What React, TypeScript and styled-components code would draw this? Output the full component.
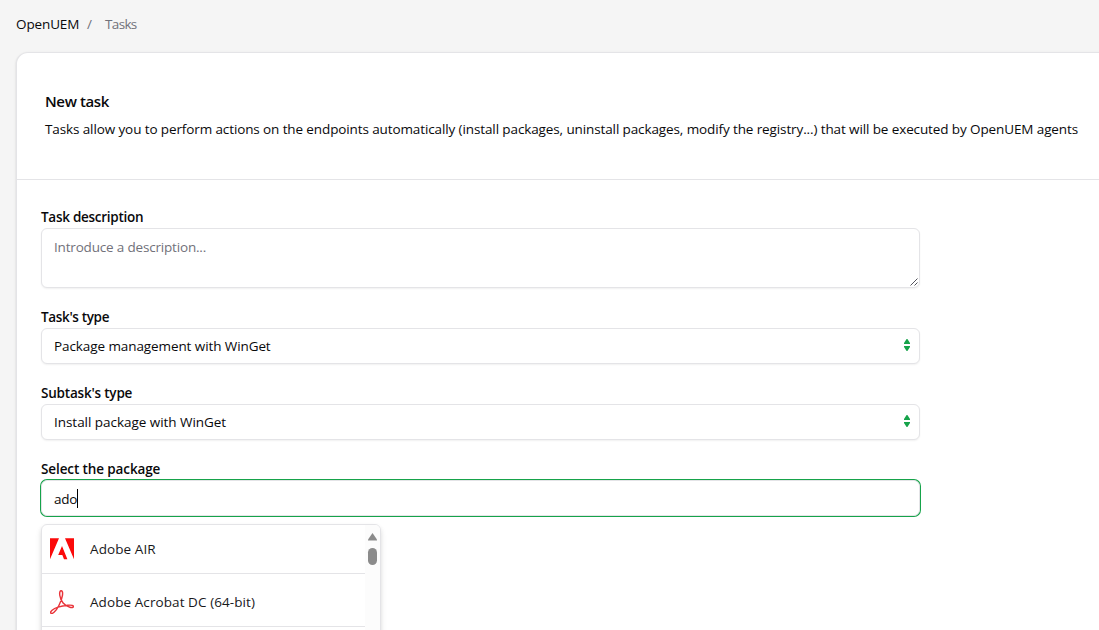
import React from 'react';
import styled, { createGlobalStyle } from 'styled-components';

const GlobalStyle = createGlobalStyle`
  *, *::before, *::after { box-sizing: border-box; }
  body {
    margin: 0;
    background: #f5f5f5;
    color: #09090b;
    font: 400 14px/20px 'Segoe UI', 'Open Sans', 'Noto Sans', sans-serif;
    overflow: hidden;
  }
`;

const Page = styled.div`
  height: 630px;
  display: flex;
  flex-direction: column;
  padding-left: 16px;
  overflow: hidden;
`;

const Fit = styled.span<{ $spacing?: number; $size?: number }>`
  font-size: ${(p) => p.$size ?? 13.5}px;
  letter-spacing: ${(p) => p.$spacing ?? 0}px;
  white-space: nowrap;
`;

const Breadcrumb = styled.nav`
  display: flex;
  height: 52px;
  padding: 14px 0 18px;
  color: #71717a;
`;

const Crumb = styled.span<{ $active?: boolean; $width: number }>`
  width: ${(p) => p.$width}px;
  color: ${(p) => (p.$active ? '#09090b' : '#71717a')};
`;

const Card = styled.main`
  flex: 1;
  display: flex;
  flex-direction: column;
  margin-right: -16px;
  background: #fff;
  border: 1px solid #e4e4e7;
  border-bottom: 0;
  border-radius: 12px 12px 0 0;
  box-shadow: 0 1px 3px rgba(0, 0, 0, 0.1), 0 1px 2px rgba(0, 0, 0, 0.06);
`;

const CardHeader = styled.header`
  height: 127px;
  padding: 37px 28px 0;
  border-bottom: 1px solid #e4e4e7;
`;

const Title = styled.h1`
  margin: 0 0 6px;
  font-size: 16px;
  line-height: 22px;
  font-weight: 600;
`;

const Description = styled.p`
  margin: 0;
  padding-top: 1px;
`;

const Form = styled.form`
  display: flex;
  flex-direction: column;
  gap: 20px;
  width: 903px;
  padding: 28px 0 0 24px;
`;

const Field = styled.div`
  display: flex;
  flex-direction: column;
`;

const Label = styled.label`
  height: 20px;
  line-height: 18px;
  font-weight: 600;
`;

const Control = styled.div<{ $height: number; $focused?: boolean }>`
  display: flex;
  justify-content: space-between;
  height: ${(p) => p.$height}px;
  padding: 8px 9px 0 12px;
  line-height: ${(p) => (p.$focused ? 21 : 19)}px;
  background: #fff;
  border: 1px solid #e4e4e7;
  border-radius: 6px;
  box-shadow: ${(p) => (p.$focused ? '0 0 0 1px #16a34a' : '0 1px 2px rgba(0, 0, 0, 0.06)')};
`;

const Placeholder = styled.span`
  color: #71717a;
`;

const Grip = styled.svg`
  align-self: flex-end;
  margin: 0 -8px 1px 0;
`;

const Caret = styled.span`
  width: 1px;
  height: 19px;
  margin-right: auto;
  background: #000;
`;

const Dropdown = styled.div`
  display: flex;
  width: 340px;
  height: 160px;
  margin-top: 8px;
  border: 1px solid #e4e4e7;
  border-radius: 6px;
  box-shadow: 0 4px 6px rgba(0, 0, 0, 0.1), 0 2px 4px rgba(0, 0, 0, 0.06);
  overflow: hidden;
`;

const Options = styled.ul`
  flex: 1;
  margin: 0;
  padding: 0;
  list-style: none;
`;

const Option = styled.li<{ $height: number }>`
  display: flex;
  align-items: flex-end;
  gap: 16px;
  height: ${(p) => p.$height}px;
  padding: 0 8px 12px;
  border-bottom: 1px solid #e4e4e7;
  color: #18181b;
`;

const OptionText = styled.span`
  height: 22px;
`;

const Scrollbar = styled.div`
  display: flex;
  flex-direction: column;
  align-items: center;
  gap: 7px;
  width: 15px;
  padding-top: 8px;
  background: #fcfcfc;
`;

const Thumb = styled.div`
  width: 9px;
  height: 17px;
  border-radius: 5px;
  background: #8b8b8b;
`;

const SorterIcon = styled.svg`
  margin-top: 2px;
`;

const Sorter = () => (
  <SorterIcon width="6" height="12" viewBox="0 0 6 12" fill="#16a34a">
    <path d="M2.6 0H3.4L6 4V5H0V4ZM0 7H6V8L3.4 12H2.6L0 8Z" />
  </SorterIcon>
);

const AdobeLogo = () => (
  <svg width="24" height="24" viewBox="0 0 24 24" fill="#fb0a0a">
    <path d="M0 1.3H9L0 22.3ZM15 1.3H24V22.3ZM12 9.1L17.4 22.3H14L12.3 18.1H8.2Z" />
  </svg>
);

const AcrobatLogo = () => (
  <svg width="24" height="24" viewBox="0 0 24 24" fill="none" stroke="#e9343a" strokeWidth="1.45">
    <path d="M0.9 23.2C-0.4 21.8 3 18.8 8 17.1C13.7 15.2 23.2 14.2 23.4 16.4C23.6 18.7 17.3 17.7 13.1 13C9.3 8.7 8.7 0.7 11.1 0.7C13.8 0.7 12.7 8.2 8.9 15.5C5.8 21.5 2.4 24.5 0.9 23.2Z" />
  </svg>
);

export default function App() {
  return (
    <>
      <GlobalStyle />
      <Page>
        <Breadcrumb>
          <Crumb $active $width={71}><Fit $spacing={-0.12}>OpenUEM</Fit></Crumb>
          <Crumb $width={18}><Fit>/</Fit></Crumb>
          <Crumb $width={60}><Fit $spacing={-0.65}>Tasks</Fit></Crumb>
        </Breadcrumb>
        <Card>
          <CardHeader>
            <Title><Fit $size={15} $spacing={-0.38}>New task</Fit></Title>
            <Description>
              <Fit $spacing={-0.112}>Tasks allow you to perform actions on the endpoints automatically (install packages, uninstall packages, modify the registry...) that will be executed by OpenUEM agents</Fit>
            </Description>
          </CardHeader>
          <Form>
            <Field>
              <Label><Fit $spacing={-0.27}>Task description</Fit></Label>
              <Control $height={60}>
                <Placeholder><Fit $spacing={-0.18}>Introduce a description...</Fit></Placeholder>
                <Grip width="8" height="8" viewBox="0 0 8 8" stroke="#52525b" strokeWidth="1">
                  <path d="M0.5 7.5L7.5 0.5M4.5 7.5L7.5 4.5" />
                </Grip>
              </Control>
            </Field>
            <Field>
              <Label><Fit $spacing={-0.34}>Task's type</Fit></Label>
              <Control $height={36}>
                <Fit $spacing={-0.09}>Package management with WinGet</Fit>
                <Sorter />
              </Control>
            </Field>
            <Field>
              <Label><Fit $spacing={-0.2}>Subtask's type</Fit></Label>
              <Control $height={36}>
                <Fit $spacing={-0.04}>Install package with WinGet</Fit>
                <Sorter />
              </Control>
            </Field>
            <Field>
              <Label><Fit $spacing={-0.11}>Select the package</Fit></Label>
              <Control $height={36} $focused>
                <Fit $spacing={-0.3}>ado</Fit>
                <Caret />
              </Control>
              <Dropdown>
                <Options>
                  <Option $height={49}>
                    <AdobeLogo />
                    <OptionText><Fit $spacing={0.1}>Adobe AIR</Fit></OptionText>
                  </Option>
                  <Option $height={53}>
                    <AcrobatLogo />
                    <OptionText><Fit $spacing={0.08}>Adobe Acrobat DC (64-bit)</Fit></OptionText>
                  </Option>
                </Options>
                <Scrollbar>
                  <svg width="9" height="8" viewBox="0 0 9 8" fill="#8b8b8b">
                    <path d="M4.5 0L9 6.5V7.5H0V6.5Z" />
                  </svg>
                  <Thumb />
                </Scrollbar>
              </Dropdown>
            </Field>
          </Form>
        </Card>
      </Page>
    </>
  );
}
